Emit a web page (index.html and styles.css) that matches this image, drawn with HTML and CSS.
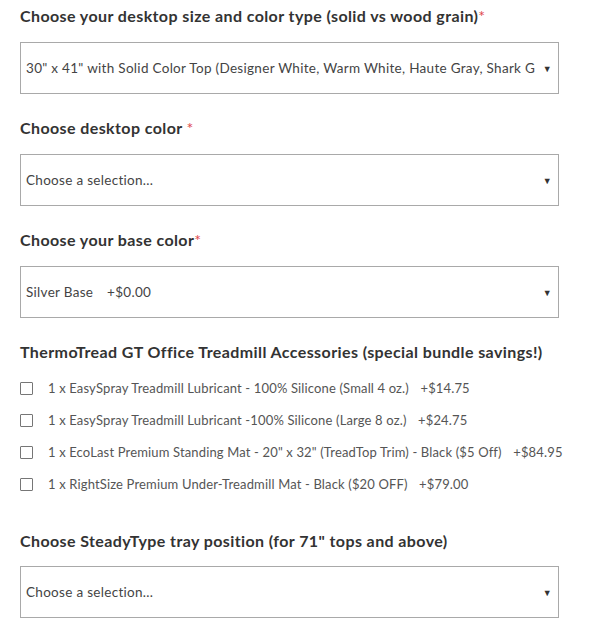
FILE: index.html
```
<!DOCTYPE html>
<html>
<head>
<meta charset="utf-8">
<link rel="stylesheet" href="styles.css">
</head>
<body>
<div class="form">
  <div class="group">
    <div class="label">Choose your desktop size and color type (solid vs wood grain)<span class="req">*</span></div>
    <div class="select"><span class="value">30" x 41" with Solid Color Top (Designer White, Warm White, Haute Gray, Shark Gray)</span><span class="arrow">▼</span></div>
  </div>
  <div class="group">
    <div class="label">Choose desktop color <span class="req">*</span></div>
    <div class="select"><span class="value">Choose a selection...</span><span class="arrow">▼</span></div>
  </div>
  <div class="group">
    <div class="label">Choose your base color<span class="req">*</span></div>
    <div class="select"><span class="value">Silver Base <span class="price">+$0.00</span></span><span class="arrow">▼</span></div>
  </div>
  <div class="group checks">
    <div class="label">ThermoTread GT Office Treadmill Accessories (special bundle savings!)</div>
    <ul class="options">
      <li class="option"><span class="box"></span><span class="otext">1 x EasySpray Treadmill Lubricant - 100% Silicone (Small 4 oz.) <span class="price">+$14.75</span></span></li>
      <li class="option"><span class="box"></span><span class="otext">1 x EasySpray Treadmill Lubricant -100% Silicone (Large 8 oz.) <span class="price">+$24.75</span></span></li>
      <li class="option"><span class="box"></span><span class="otext">1 x EcoLast Premium Standing Mat - 20" x 32" (TreadTop Trim) - Black ($5 Off) <span class="price">+$84.95</span></span></li>
      <li class="option"><span class="box"></span><span class="otext">1 x RightSize Premium Under-Treadmill Mat - Black ($20 OFF) <span class="price">+$79.00</span></span></li>
    </ul>
  </div>
  <div class="group last">
    <div class="label">Choose SteadyType tray position (for 71" tops and above)</div>
    <div class="select"><span class="value">Choose a selection...</span><span class="arrow">▼</span></div>
  </div>
</div>
</body>
</html>
```
FILE: styles.css
```
html, body {
  margin: 0;
  padding: 0;
  background: #fff;
}
body {
  font-family: Lato, "Open Sans", sans-serif;
  color: #333;
}
.form {
  padding: 6px 0 0 20px;
  width: 539px;
  display: flex;
  flex-direction: column;
}
.group {
  display: flex;
  flex-direction: column;
  gap: 16px;
  margin-bottom: 24px;
}
.label {
  font-size: 16px;
  font-weight: 700;
  line-height: 20px;
  letter-spacing: 0.4px;
  color: #333;
  white-space: nowrap;
}
.req {
  color: #e0474c;
  font-weight: 400;
}
.select {
  box-sizing: border-box;
  height: 52px;
  border: 1px solid #a9a9a9;
  display: flex;
  align-items: center;
  padding: 0 6px 0 5px;
  font-size: 13.5px;
  letter-spacing: 0.3px;
  color: #444;
}
.value {
  flex: 1;
  white-space: nowrap;
  overflow: hidden;
}
.arrow {
  font-size: 9px;
  color: #333;
  margin-left: 8px;
}
.select .price {
  margin-left: 10px;
}
.checks {
  gap: 10px;
  margin-bottom: 31px;
}
.options {
  list-style: none;
  margin: 0;
  padding: 0;
  display: flex;
  flex-direction: column;
}
.option {
  height: 32px;
  display: flex;
  align-items: center;
  font-size: 13px;
  letter-spacing: 0.15px;
  color: #555;
  white-space: nowrap;
}
.option .price {
  margin-left: 8px;
}
.box {
  box-sizing: border-box;
  width: 13px;
  height: 13px;
  border: 1px solid #767676;
  border-radius: 1px;
  margin-right: 15px;
  flex: none;
}
.last {
  gap: 15px;
  margin-bottom: 0;
}
```
